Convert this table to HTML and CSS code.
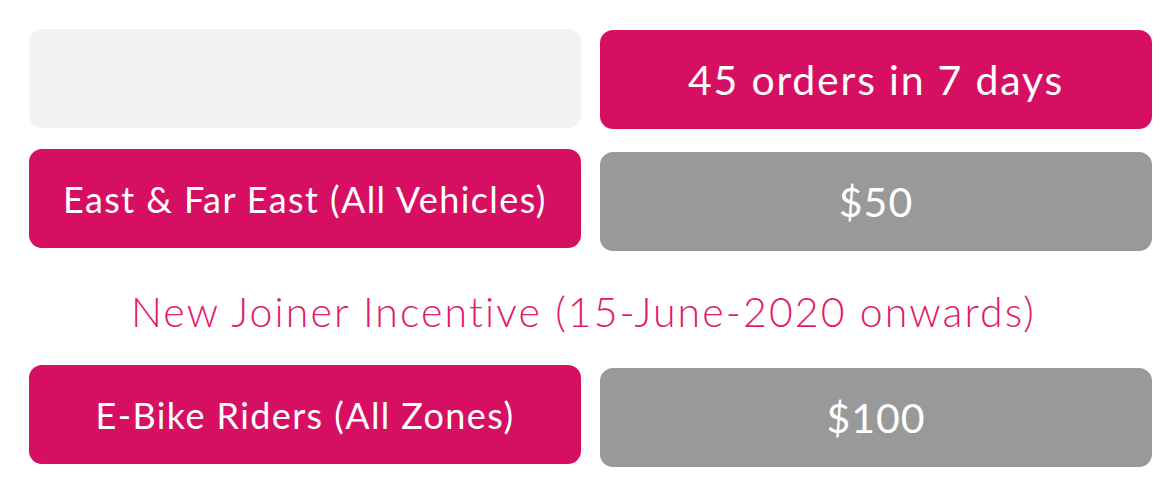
FILE: index.html
```html
<!DOCTYPE html>
<html lang="en">
  <head>
    <meta charset="UTF-8" />
    <meta name="viewport" content="width=device-width, initial-scale=1.0" />
    <title>Rider Incentives</title>
    <link rel="stylesheet" href="styles.css">
  </head>
  <body>
    <div class="table">
      <div class="cell blank"></div>
      <div class="cell head">45 orders in 7 days</div>

      <div class="cell zone">East &amp; Far East (All Vehicles)</div>
      <div class="cell amount">$50</div>

      <div class="section-title">New Joiner Incentive (15-June-2020 onwards)</div>

      <div class="cell zone">E-Bike Riders (All Zones)</div>
      <div class="cell amount">$100</div>
    </div>
  </body>
</html>
```

FILE: styles.css
```css
body {
  margin: 0;
  padding: 29px 10px 0 29px;
  font-family: Lato, "Open Sans", sans-serif;
  background: #ffffff;
}
.table {
  display: grid;
  grid-template-columns: 552px 552px;
  column-gap: 19px;
  row-gap: 20px;
}
.cell {
  height: 99px;
  border-radius: 13px;
  display: flex;
  align-items: center;
  justify-content: center;
  color: #fff;
}
.blank {
  background: #f2f2f2;
}
.head {
  background: #d60f62;
  font-size: 41px;
  letter-spacing: 1.8px;
  margin-top: 1px;
}
.zone {
  background: #d60f62;
  font-size: 36px;
  letter-spacing: 1.4px;
}
.amount {
  background: #999999;
  font-size: 41px;
  letter-spacing: 1px;
  margin-top: 3px;
}
.section-title {
  grid-column: 1 / 3;
  height: 76px;
  margin-bottom: -2px;
  display: flex;
  align-items: center;
  justify-content: center;
  color: #e21a6c;
  font-size: 41px;
  font-weight: 300;
  letter-spacing: 2.1px;
  padding: 4px 14px 0 0;
  box-sizing: border-box;
}
```
